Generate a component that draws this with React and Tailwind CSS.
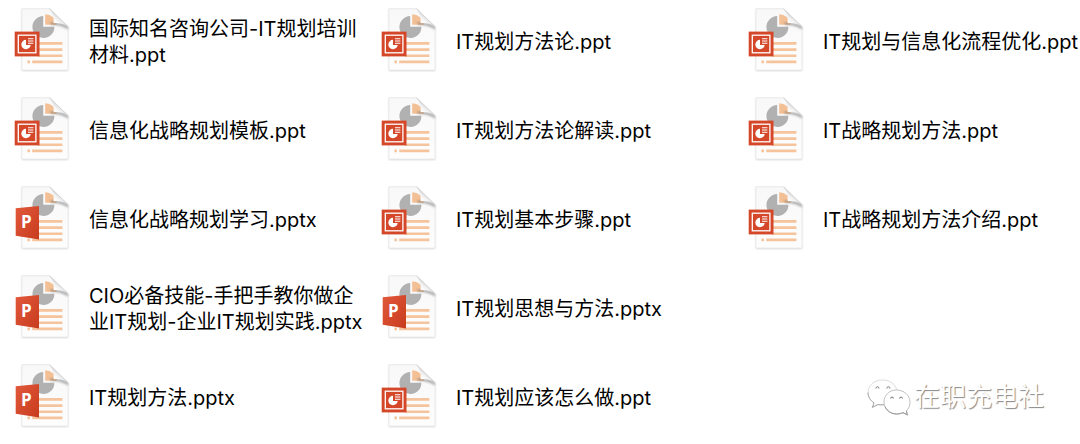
const columns = [
    [
        '国际知名咨询公司-IT规划培训材料.ppt',
        '信息化战略规划模板.ppt',
        '信息化战略规划学习.pptx',
        'CIO必备技能-手把手教你做企业IT规划-企业IT规划实践.pptx',
        'IT规划方法.pptx',
    ],
    [
        'IT规划方法论.ppt',
        'IT规划方法论解读.ppt',
        'IT规划基本步骤.ppt',
        'IT规划思想与方法.pptx',
        'IT规划应该怎么做.ppt',
    ],
    [
        'IT规划与信息化流程优化.ppt',
        'IT战略规划方法.ppt',
        'IT战略规划方法介绍.ppt',
    ],
];

// Gradients are shared by every icon on the page
const IconDefs = () => (
    <svg width="0" height="0" className="absolute" aria-hidden="true">
        <defs>
            <linearGradient id="fold" gradientUnits="userSpaceOnUse" x1="38" y1="18" x2="46" y2="8">
                <stop offset="0" stopColor="#d4d4d4" />
                <stop offset="0.35" stopColor="#ffffff" />
                <stop offset="0.65" stopColor="#f2f2f2" />
                <stop offset="1" stopColor="#cfcfcf" />
            </linearGradient>
            <linearGradient id="page" x1="0" y1="0" x2="0" y2="1">
                <stop offset="0" stopColor="#f8f8f8" />
                <stop offset="1" stopColor="#fdfdfd" />
            </linearGradient>
            <linearGradient id="badge" x1="0" y1="0" x2="1" y2="1">
                <stop offset="0" stopColor="#e2583a" />
                <stop offset="1" stopColor="#c83c1e" />
            </linearGradient>
            <filter id="soft" x="-20%" y="-20%" width="140%" height="140%">
                <feGaussianBlur stdDeviation="0.9" />
            </filter>
        </defs>
    </svg>
);

const PptBadge = () => (
    <g>
        <rect x="0.7" y="23.6" width="24.8" height="24.8" fill="#d44729" />
        <rect x="4.3" y="27.2" width="17.6" height="17.6" fill="none" stroke="#fff" strokeWidth="1.3" />
        <path d="M12 31.8 A4.7 4.7 0 1 0 16.7 36.9 L12 36.9 Z" fill="#fff" />
        <path d="M14 30.7 H19.4 M14 33 H19.4 M14 35.2 H19.4" stroke="#fff" strokeWidth="1.1" />
    </g>
);

const PptxBadge = () => (
    <g>
        <path d="M1.7 22.3 L25 20.1 V53.5 L1.7 49.7 Z" fill="url(#badge)" />
        <text x="7" y="42" fill="#fff" fontSize="17" fontWeight="700" fontFamily="'Open Sans', sans-serif">P</text>
    </g>
);

const FileIcon = ({ modern }) => (
    <svg width="56" height="64" viewBox="0 0 56 64" className="shrink-0" aria-hidden="true">
        <path d="M8 1 H36 L54 19 V63 H8 Z" fill="#999" opacity="0.4" filter="url(#soft)" />
        <path d="M8 0.8 H35.5 L54 19 V62 H8 Z" fill="url(#page)" stroke="#e6e6e6" strokeWidth="0.7" />
        <path d="M29.2 8 V18.7 H40.4 A11 11 0 1 1 29.2 8 Z" fill="#b1b1b1" />
        <path d="M31.2 6.2 A11.6 11.6 0 0 1 42.8 16.8 H31.2 Z" fill="#f3c096" />
        <path d="M36 14.5 Q49 14.5 54 18.5 V21.5 Q48 17 37 16.8 Z" fill="#555" opacity="0.5" filter="url(#soft)" />
        <path d="M35.5 0.8 Q40.5 7 39.6 15.2 Q49 14.4 54 18.4 Z" fill="url(#fold)" />
        <path d="M36.4 0.4 L54.6 18.6 H56 V0 Z" fill="#fff" />
        <path d="M35.5 0.8 L54 18.6" fill="none" stroke="#d0d0d0" strokeWidth="0.8" />
        <path d="M24 35.4 H48.4 M24 41.6 H48.4 M24 47.7 H48.4 M18.2 53.9 H48.4 M13.4 53.9 H16" stroke="#f6c49c" strokeWidth="2.6" />
        {modern ? <PptxBadge /> : <PptBadge />}
    </svg>
);

const FileItem = ({ name }) => (
    <li className="flex h-[62px] items-center gap-[19px]">
        <FileIcon modern={name.endsWith('.pptx')} />
        <span className="pt-[3px] text-[20px] leading-[26px] break-all">{name}</span>
    </li>
);

const WechatIcon = () => (
    <svg width="44" height="38" viewBox="0 0 44 38" className="shrink-0" aria-hidden="true">
        <path d="M15.5 2 C7 2 1 7.5 1 14.5 C1 19 3.4 22.4 7 24.8 L5.4 29.4 L11 26.5 C17 28.5 30 24 30 14.5 C30 7.5 24 2 15.5 2 Z" fill="#fff" stroke="#dcdcdc" strokeWidth="1" />
        <path d="M1 14.5 C1 19 3.4 22.4 7 24.8 L5.4 29.4 L11 26.5 C13 27 15 27 17 26.6" fill="none" stroke="#a8a8a8" strokeWidth="1" />
        <path d="M29.5 12 C22 12 17 17.5 17 24 C17 31 23 36 29.5 36 C32 36 34 35.6 36 34.6 L40.4 37 L39.4 32.8 C41.8 30.6 43 27.6 43 24 C43 17.5 37 12 29.5 12 Z" fill="#fff" stroke="#c0c0c0" strokeWidth="1" />
        <path d="M18 28.5 C20 33.5 25 36 29.5 36 C32 36 34 35.6 36 34.6 L40.4 37 L39.4 32.8" fill="none" stroke="#989898" strokeWidth="1" />
        <path
            d="M8.6 10.4 Q10.4 7 12.2 10.4 M19.6 10.4 Q21.4 7 23.2 10.4 M23.4 20.6 Q25 17.6 26.6 20.6 M32.4 20.6 Q34 17.6 35.6 20.6"
            fill="none"
            stroke="#8c8c8c"
            strokeWidth="1.1"
        />
    </svg>
);

export default function App() {
    return (
        <main className="relative bg-white pt-[9px] pb-[17px] pl-[14px] text-black font-[Inter,'Noto_Sans_CJK_SC',sans-serif]">
            <IconDefs />
            <div className="grid grid-cols-[351fr_351fr_332fr] gap-x-4">
                {columns.map((files) => (
                    <ul key={files[0]} className="flex flex-col gap-[27px]">
                        {files.map((name) => (
                            <FileItem key={name} name={name} />
                        ))}
                    </ul>
                ))}
            </div>

            {/* Account watermark */}
            <div className="absolute right-[36px] bottom-[27px] flex items-center gap-[3px]">
                <WechatIcon />
                <span className="text-[26px] leading-[40px] text-white [text-shadow:1px_1px_1px_#888]">在职充电社</span>
            </div>
        </main>
    );
}
